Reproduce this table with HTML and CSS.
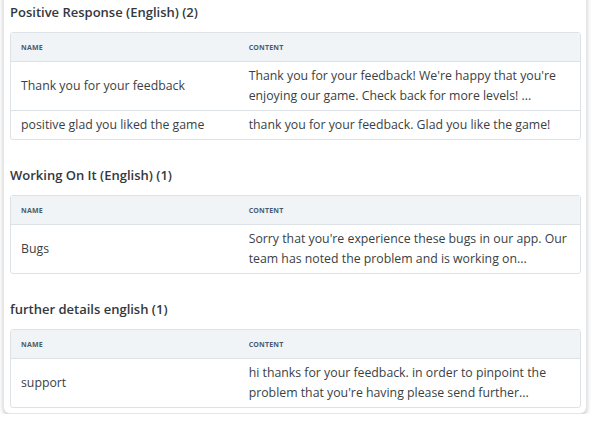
FILE: index.html
```html
<!DOCTYPE html>
<html>
<head>
<meta charset="utf-8">
<link rel="stylesheet" href="styles.css">
</head>
<body>
<div class="card">
  <section class="group first">
    <h3 class="group-title">Positive Response (English) (2)</h3>
    <table class="replies">
      <thead><tr><th class="col-name">Name</th><th>Content</th></tr></thead>
      <tbody>
        <tr><td>Thank you for your feedback</td><td>Thank you for your feedback! We're happy that you're enjoying our game. Check back for more levels! ...</td></tr>
        <tr><td>positive glad you liked the game</td><td>thank you for your feedback. Glad you like the game!</td></tr>
      </tbody>
    </table>
  </section>
  <section class="group">
    <h3 class="group-title">Working On It (English) (1)</h3>
    <table class="replies">
      <thead><tr><th class="col-name">Name</th><th>Content</th></tr></thead>
      <tbody>
        <tr><td>Bugs</td><td>Sorry that you're experience these bugs in our app. Our team has noted the problem and is working on...</td></tr>
      </tbody>
    </table>
  </section>
  <section class="group">
    <h3 class="group-title">further details english (1)</h3>
    <table class="replies">
      <thead><tr><th class="col-name">Name</th><th>Content</th></tr></thead>
      <tbody>
        <tr><td>support</td><td>hi thanks for your feedback. in order to pinpoint the problem that you're having please send further...</td></tr>
      </tbody>
    </table>
  </section>
</div>
</body>
</html>
```
FILE: styles.css
```css
html, body {
  margin: 0;
  padding: 0;
  background: #ffffff;
}
body {
  font-family: "Open Sans", "Liberation Sans", sans-serif;
  color: #3a3f44;
}
.card {
  margin: -6px 4px 0 3px;
  padding: 0 5px 5px 6px;
  background: #fff;
  border: 1px solid #e4e6e8;
  border-radius: 0 0 7px 7px;
  box-shadow: 0 2px 4px rgba(0,0,0,0.22);
}
.group {
  margin-top: 27px;
}
.group.first {
  margin-top: 9px;
}
.group-title {
  margin: 0 0 12px 0;
  font-size: 13px;
  line-height: 16px;
  font-weight: 600;
  color: #33383d;
}
.replies {
  width: 100%;
  border-collapse: separate;
  border-spacing: 0;
  border: 1px solid #dde2e7;
  border-radius: 3px;
  table-layout: fixed;
  font-size: 12.3px;
}
.replies th {
  background: #f1f4f7;
  text-align: left;
  font-size: 7px;
  font-weight: 700;
  letter-spacing: 0.2px;
  text-transform: uppercase;
  color: #4a5b6d;
  height: 28px;
  padding: 0 10px;
  border-bottom: 1px solid #dde2e7;
}
.replies th.col-name {
  width: 36.5%;
}
.replies td {
  padding: 4px 10px;
  line-height: 20px;
  vertical-align: middle;
  color: #3a3f44;
}
.replies tbody tr + tr td {
  border-top: 1px solid #dde2e7;
}
```
